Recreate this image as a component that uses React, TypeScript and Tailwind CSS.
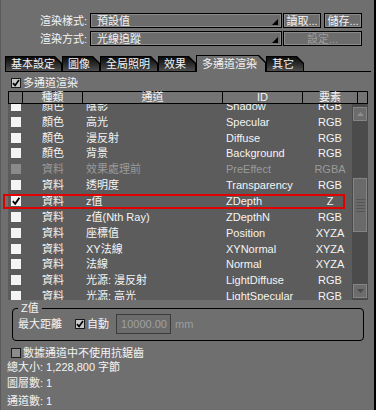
import React from "react";

const FONT = "[font-family:'Liberation_Sans','Noto_Sans_CJK_TC',sans-serif]";

type Row = { t: string; c: string; id: string; e: string; disabled?: boolean; checked?: boolean };

const rows: Row[] = [
  { t: "顏色", c: "陰影", id: "Shadow", e: "RGB" },
  { t: "顏色", c: "高光", id: "Specular", e: "RGB" },
  { t: "顏色", c: "漫反射", id: "Diffuse", e: "RGB" },
  { t: "顏色", c: "背景", id: "Background", e: "RGB" },
  { t: "資料", c: "效果處理前", id: "PreEffect", e: "RGBA", disabled: true },
  { t: "資料", c: "透明度", id: "Transparency", e: "RGB" },
  { t: "資料", c: "z值", id: "ZDepth", e: "Z", checked: true },
  { t: "資料", c: "z值(Nth Ray)", id: "ZDepthN", e: "RGB" },
  { t: "資料", c: "座標值", id: "Position", e: "XYZA" },
  { t: "資料", c: "XY法線", id: "XYNormal", e: "XYZA" },
  { t: "資料", c: "法線", id: "Normal", e: "XYZA" },
  { t: "資料", c: "光源: 漫反射", id: "LightDiffuse", e: "RGB" },
  { t: "資料", c: "光源: 高光", id: "LightSpecular", e: "RGB" },
];

function Check() {
  return (
    <svg width="10" height="10" viewBox="0 0 10 10" className="block">
      <path d="M1.8 5.2 L4.2 7.8 L8.4 1.8" stroke="#000" strokeWidth="1.9" fill="none" />
    </svg>
  );
}

function ListBox({ checked, disabled }: { checked?: boolean; disabled?: boolean }) {
  return (
    <div
      className={`w-[10px] h-[10px] flex items-center justify-center ${disabled ? "bg-[#8a8a8a]" : "bg-[#f4f4f4]"}`}
    >
      {checked ? <Check /> : null}
    </div>
  );
}

function FormBox({ checked }: { checked?: boolean }) {
  return (
    <div
      className={`w-[10px] h-[10px] border border-[#1a1a1a] flex items-center justify-center ${checked ? "bg-[#c8c8c8]" : "bg-[#8c8c8c]"}`}
    >
      {checked ? (
        <svg width="8" height="8" viewBox="0 0 8 8" className="block">
          <path d="M1 4.2 L3.1 6.4 L7 1" stroke="#000" strokeWidth="1.7" fill="none" />
        </svg>
      ) : null}
    </div>
  );
}

const CLIP = "[clip-path:polygon(0_0,calc(100%_-_7px)_0,100%_7px,100%_100%,0_100%)]";

function Tab({ label, w, active }: { label: string; w: string; active?: boolean }) {
  if (active) {
    return (
      <div className={`relative z-10 ${w} h-[17px] mb-[-1px] bg-black p-[1px] pb-0 ${CLIP}`}>
        <div className={`h-full w-full bg-[#6f6f6f] ${CLIP} flex items-center pl-[5px] text-[#f4f4f4]`}>{label}</div>
      </div>
    );
  }
  return (
    <div className={`${w} h-[15px] bg-black p-[1px] pb-0 ${CLIP}`}>
      <div
        className={`h-full w-full bg-gradient-to-b from-[#0c0c0c] to-[#4e4e4e] ${CLIP} flex items-center pl-[5px] text-[#f4f4f4]`}
      >
        {label}
      </div>
    </div>
  );
}

function Btn({ label, w, disabled }: { label: string; w: string; disabled?: boolean }) {
  return (
    <div
      className={`${w} h-[15px] border border-black bg-[#6c6c6c] shadow-[inset_0_0_0_1px_#8a8a8a] flex items-center justify-center ${disabled ? "text-[#9c9c9c]" : "text-[#f4f4f4]"}`}
    >
      {label}
    </div>
  );
}

function Drop({ value }: { value: string }) {
  return (
    <div className="relative w-[192px] h-[15px] border border-black bg-[#6c6c6c] shadow-[inset_0_0_0_1px_#8a8a8a] flex items-center pl-[6px] text-[#f4f4f4]">
      {value}
      <svg width="6" height="6" viewBox="0 0 6 6" className="absolute right-[3px] bottom-[2px]">
        <polygon points="6,0 6,6 0,6" fill="#000" />
      </svg>
    </div>
  );
}

export default function App() {
  return (
    <div
      className={`${FONT} w-[376px] h-[410px] overflow-hidden bg-[#6f6f6f] border-l border-l-[#5a5a5a] border-r-2 border-r-black text-[11px] leading-[12px] text-[#f4f4f4] flex flex-col`}
    >
      {/* top rows */}
      <div className="pt-[13px] flex items-center">
        <div className="w-[86px] text-right">渲染樣式:</div>
        <div className="ml-[3px]">
          <Drop value="預設值" />
        </div>
        <div className="ml-[1px]">
          <Btn label="讀取..." w="w-[38px]" />
        </div>
        <div className="ml-[3px]">
          <Btn label="儲存..." w="w-[38px]" />
        </div>
      </div>
      <div className="mt-[3px] flex items-center">
        <div className="w-[86px] text-right">渲染方式:</div>
        <div className="ml-[3px]">
          <Drop value="光線追蹤" />
        </div>
        <div className="ml-[1px]">
          <Btn label="設定..." w="w-[79px]" disabled />
        </div>
      </div>

      {/* tabs */}
      <div className="mt-[9px] ml-[4px] w-[366px] h-[17px] flex items-end border-b border-black">
        <Tab label="基本設定" w="w-[57px]" />
        <Tab label="圖像" w="w-[38px]" />
        <Tab label="全局照明" w="w-[58px]" />
        <Tab label="效果" w="w-[38px]" />
        <Tab label="多通道渲染" w="w-[70px]" active />
        <Tab label="其它" w="w-[38px]" />
      </div>

      {/* multipass checkbox */}
      <div className="mt-[5px] h-[12px] flex items-center pl-[10px] gap-[2px]">
        <FormBox checked />
        <span>多通道渲染</span>
      </div>

      {/* header */}
      <div className="mt-[2px] ml-[7px] w-[360px] h-[13px] flex border border-black border-r-0 bg-[#747474] text-[#f4f4f4] leading-[11px]">
        <div className="w-[14px] border-r border-black" />
        <div className="w-[60px] border-r border-black text-center">種類</div>
        <div className="w-[140px] border-r border-black text-center">通道</div>
        <div className="w-[80px] border-r border-black text-center">ID</div>
        <div className="w-[55px] border-r border-black text-center">要素</div>
        <div className="w-[10px] border-r border-black" />
      </div>

      {/* list */}
      <div className="relative ml-[7px] w-[360px] h-[196px] flex">
        <div className="w-[344px] h-full overflow-hidden bg-[#5c5c5c]">
          <div className="mt-[-6px] flex flex-col">
            {rows.map((r) => (
              <div
                key={r.id}
                className={`h-[15.85px] shrink-0 flex items-center ${r.disabled ? "text-[#9a9a9a]" : "text-[#f4f4f4]"}`}
              >
                <div className="w-[15px] flex justify-center">
                  <ListBox checked={r.checked} disabled={r.disabled} />
                </div>
                <div className="w-[60px] text-center">{r.t}</div>
                <div className="w-[140px] pl-[3px] whitespace-nowrap">{r.c}</div>
                <div className="w-[80px] pl-[3px]">{r.id}</div>
                <div className="w-[49px] shrink-0 flex justify-center">
                  <span className="ml-[5px]">{r.e}</span>
                </div>
              </div>
            ))}
          </div>
        </div>
        {/* scrollbar */}
        <div className="w-[16px] h-full bg-[#4b4b4b] flex flex-col items-center pt-[3px]">
          <div className="w-[14px] h-[14px] bg-[#6c6c6c] border border-[#858585] flex items-center justify-center">
            <svg width="7" height="4" viewBox="0 0 7 4">
              <polygon points="3.5,0 7,4 0,4" fill="#8e8e8e" />
            </svg>
          </div>
          <div className="mt-[57px] w-[14px] h-[54px] bg-[#6a6a6a] border border-[#858585] flex flex-col items-center justify-center gap-[2px]">
            <div className="w-[9px] h-[1px] bg-[#555]" />
            <div className="w-[9px] h-[1px] bg-[#555]" />
            <div className="w-[9px] h-[1px] bg-[#555]" />
            <div className="w-[9px] h-[1px] bg-[#555]" />
            <div className="w-[9px] h-[1px] bg-[#555]" />
          </div>
          <div className="mt-[52px] w-[14px] h-[14px] bg-[#6c6c6c] border border-[#858585] flex items-center justify-center">
            <svg width="7" height="4" viewBox="0 0 7 4">
              <polygon points="0,0 7,0 3.5,4" fill="#4a4a4a" />
            </svg>
          </div>
        </div>
        {/* selection highlight */}
        <div className="absolute left-[-5px] top-[90px] w-[342px] h-[15px] border-2 border-[#e00000] pointer-events-none" />
      </div>

      {/* Z value fieldset */}
      <fieldset className="mt-[2px] ml-[11px] w-[352px] border border-black rounded-[4px] pb-[6px]">
        <legend className="ml-[5px] px-[3px] leading-[12px]">Z值</legend>
        <div className="flex items-center pl-[5px] h-[20px]">
          <span>最大距離</span>
          <div className="ml-[13px]">
            <FormBox checked />
          </div>
          <span className="ml-[2px]">自動</span>
          <div className="ml-[7px] w-[55px] h-[20px] border border-[#3c3c3c] bg-[#6c6c6c] flex items-center justify-end pr-[3px] text-[#a0a0a0]">
            10000.00
          </div>
          <span className="ml-[4px] text-[#9c9c9c]">mm</span>
        </div>
      </fieldset>

      <div className="mt-[6px] h-[12px] flex items-center pl-[10px] gap-[2px]">
        <FormBox />
        <span>數據通道中不使用抗鋸齒</span>
      </div>
      <div className="pl-[6px] leading-[16px] h-[16px]">總大小: 1,228,800 字節</div>
      <div className="pl-[6px] leading-[16px] h-[16px]">圖層數: 1</div>
      <div className="mt-[2px] pl-[6px] leading-[16px] h-[16px]">通道數: 1</div>
    </div>
  );
}
